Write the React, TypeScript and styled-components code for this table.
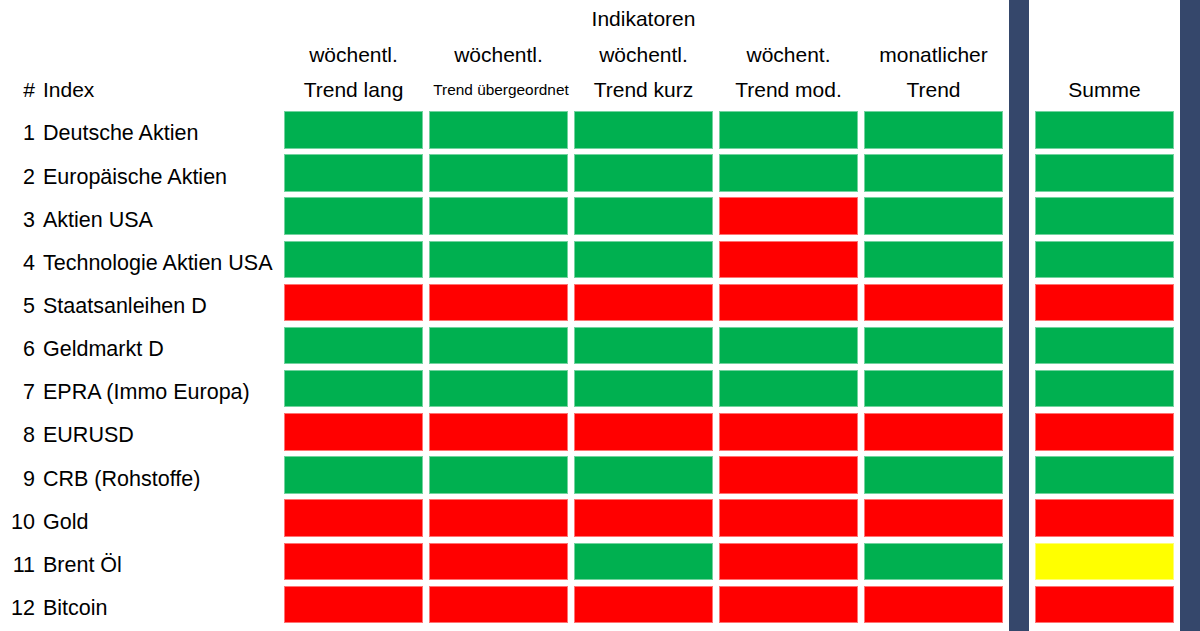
import React from "react";
import styled, { createGlobalStyle } from "styled-components";

type Signal = "g" | "r" | "y";

const colors: Record<Signal, string> = {
  g: "#00b050",
  r: "#ff0000",
  y: "#ffff00",
};

const rows: { name: string; trend: Signal[]; sum: Signal }[] = [
  { name: "Deutsche Aktien", trend: ["g", "g", "g", "g", "g"], sum: "g" },
  { name: "Europäische Aktien", trend: ["g", "g", "g", "g", "g"], sum: "g" },
  { name: "Aktien USA", trend: ["g", "g", "g", "r", "g"], sum: "g" },
  { name: "Technologie Aktien USA", trend: ["g", "g", "g", "r", "g"], sum: "g" },
  { name: "Staatsanleihen D", trend: ["r", "r", "r", "r", "r"], sum: "r" },
  { name: "Geldmarkt D", trend: ["g", "g", "g", "g", "g"], sum: "g" },
  { name: "EPRA (Immo Europa)", trend: ["g", "g", "g", "g", "g"], sum: "g" },
  { name: "EURUSD", trend: ["r", "r", "r", "r", "r"], sum: "r" },
  { name: "CRB (Rohstoffe)", trend: ["g", "g", "g", "r", "g"], sum: "g" },
  { name: "Gold", trend: ["r", "r", "r", "r", "r"], sum: "r" },
  { name: "Brent Öl", trend: ["r", "r", "g", "r", "g"], sum: "y" },
  { name: "Bitcoin", trend: ["r", "r", "r", "r", "r"], sum: "r" },
];

const headers: { top?: string; mid: string; bottom: string; small?: boolean }[] = [
  { mid: "wöchentl.", bottom: "Trend lang" },
  { mid: "wöchentl.", bottom: "Trend übergeordnet", small: true },
  { top: "Indikatoren", mid: "wöchentl.", bottom: "Trend kurz" },
  { mid: "wöchent.", bottom: "Trend mod." },
  { mid: "monatlicher", bottom: "Trend" },
];

const GlobalStyle = createGlobalStyle`
  body {
    margin: 0;
    background: #ffffff;
    font-family: "Liberation Sans", Arial, sans-serif;
    color: #000000;
  }
`;

const Table = styled.div`
  display: grid;
  grid-template-columns: 278px repeat(5, 139px) 20px 139px 20px;
  grid-template-rows: 105.5px repeat(12, 37.5px) 1fr;
  column-gap: 6px;
  row-gap: 5.65px;
  height: 100vh;
  width: 1200px;
`;

const HeaderCell = styled.div`
  display: flex;
  flex-direction: column;
  justify-content: flex-end;
  align-items: center;
  margin-bottom: -2px;
  font-size: 21px;
`;

const HeaderLine = styled.div<{ $small?: boolean }>`
  height: 35.5px;
  line-height: 35.5px;
  white-space: nowrap;
  font-size: ${(p) => (p.$small ? "15.4px" : "21px")};
  padding-left: ${(p) => (p.$small ? "5px" : "0")};
`;

const IndexHead = styled(HeaderCell)`
  flex-direction: row;
  align-items: flex-end;
  justify-content: flex-start;
`;

const Label = styled.div`
  display: flex;
  align-items: center;
  gap: 8px;
  padding-top: 8px;
  font-size: 21.5px;
  white-space: nowrap;
`;

const Num = styled.span`
  width: 35px;
  text-align: right;
`;

const Cell = styled.div<{ $c: Signal }>`
  background: ${(p) => colors[p.$c]};
  border: 1px solid rgba(255, 255, 255, 0.45);
`;

const BlueBar = styled.div<{ $col: number }>`
  grid-column: ${(p) => p.$col};
  grid-row: 1 / -1;
  background: #35476b;
`;

const App = () => {
  return (
    <>
      <GlobalStyle />
      <Table>
        <IndexHead>
          <Num as="div" style={{ height: 35.5, lineHeight: "35.5px" }}>
            #
          </Num>
          <HeaderLine style={{ marginLeft: 8 }}>Index</HeaderLine>
        </IndexHead>
        {headers.map((h, i) => (
          <HeaderCell key={i}>
            {h.top && <HeaderLine>{h.top}</HeaderLine>}
            <HeaderLine>{h.mid}</HeaderLine>
            <HeaderLine $small={h.small}>{h.bottom}</HeaderLine>
          </HeaderCell>
        ))}
        <BlueBar $col={7} />
        <HeaderCell>
          <HeaderLine>Summe</HeaderLine>
        </HeaderCell>
        <BlueBar $col={9} />
        {rows.map((r, i) => (
          <React.Fragment key={r.name}>
            <Label>
              <Num>{i + 1}</Num>
              <span>{r.name}</span>
            </Label>
            {r.trend.map((t, j) => (
              <Cell key={j} $c={t} />
            ))}
            <Cell $c={r.sum} style={{ gridColumn: 8 }} />
          </React.Fragment>
        ))}
      </Table>
    </>
  );
};

export default App;
